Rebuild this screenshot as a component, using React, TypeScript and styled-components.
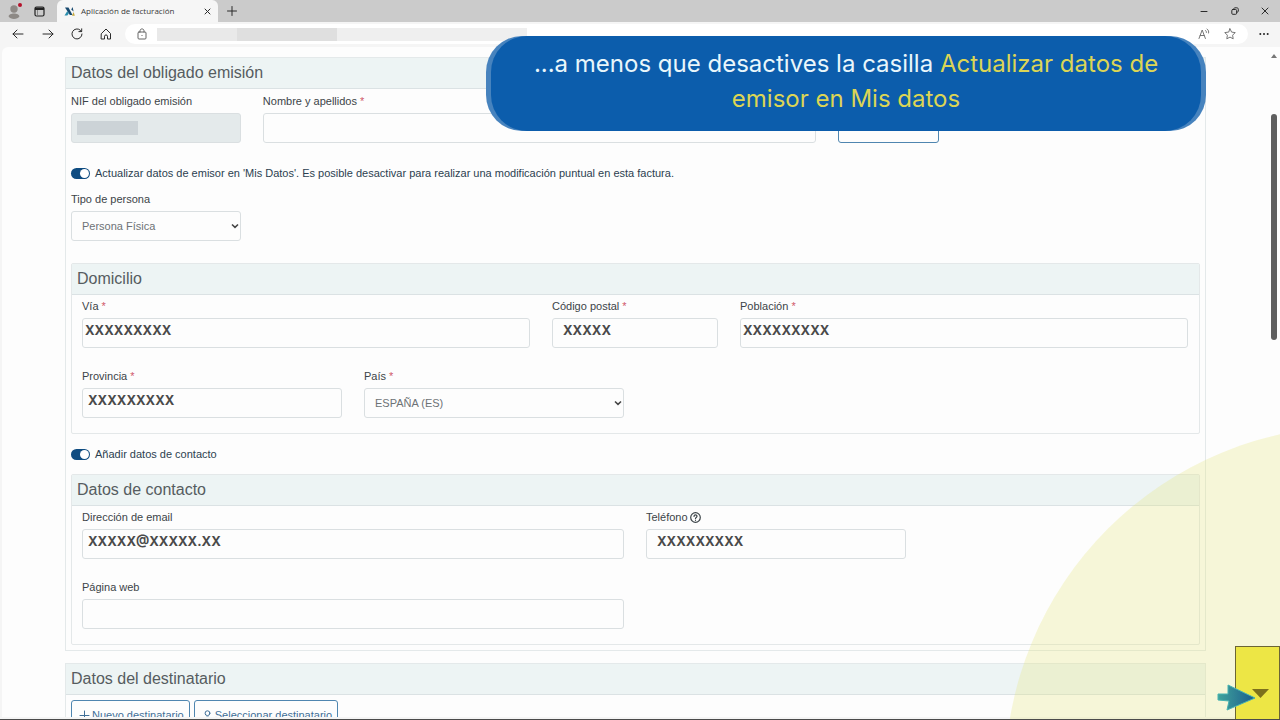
import React, { useState } from "react";
import styled, { createGlobalStyle, css } from "styled-components";

const GlobalStyle = createGlobalStyle`
  *, *::before, *::after { box-sizing: border-box; }
  body {
    margin: 0;
    background: #fdfdfd;
    color: #3c4448;
    font: 11px/16px "Liberation Sans", Arial, sans-serif;
  }
  button, input, select { font: inherit; color: inherit; }
`;

const Shell = styled.div`
  position: relative;
  display: flex;
  flex-direction: column;
  height: 100vh;
  overflow: hidden;
  background: #f5f5f5;
  border-bottom: 1px solid #4b4b4b;
`;

/* Browser chrome */
const TabStrip = styled.header`
  display: flex;
  align-items: stretch;
  flex: none;
  height: 22px;
  background: #cbcbcb;
`;

const IconButton = styled.button<{ $width?: number }>`
  display: flex;
  align-items: center;
  justify-content: center;
  flex: none;
  width: ${(p) => p.$width ?? 30}px;
  padding: 0;
  border: 0;
  background: none;
  color: #2b2b2b;
`;

const ProfileArea = styled.div`
  display: flex;
  width: 57px;
  padding-left: 2px;
`;

const Tab = styled.div`
  display: flex;
  align-items: center;
  gap: 6px;
  width: 161px;
  padding: 0 2px 0 7px;
  background: #f6f6f6;
  border-radius: 6px 6px 0 0;
  color: #3a3a3a;
  font: 8px/12px "Open Sans", "Noto Sans", sans-serif;
`;

const TabTitle = styled.span`
  flex: 1;
  white-space: nowrap;
`;

const WindowButtons = styled.div`
  display: flex;
  margin-left: auto;
`;

const Toolbar = styled.nav`
  display: flex;
  flex: none;
  height: 25px;
  padding: 2px 0 3px 3px;
`;

const AddressBar = styled.div`
  display: flex;
  flex: 1;
  align-items: center;
  margin-left: 4px;
  padding: 0 5px 0 2px;
  border-radius: 10px;
  background: #fff;
`;

const HiddenAddress = styled.div`
  display: flex;
  width: 370px;
  height: 13px;
  margin-right: auto;
  background: linear-gradient(90deg, #e9e9e9 0 80px, #dfdfdf 80px 180px, #efefef 180px);
`;

/* Page */
const Page = styled.main`
  position: relative;
  flex: 1;
  min-height: 0;
  margin: 0 0 2px 2px;
  padding: 10px 74px 0 63px;
  overflow: hidden;
  border-radius: 6px 0 0 0;
  background: #fdfdfd;
`;

const Section = styled.section`
  margin-bottom: 12px;
  border: 1px solid #e4e9ea;
`;

const SectionTitle = styled.h2`
  margin: 0;
  padding: 5px;
  border-bottom: 1px solid #dbe2e4;
  background: #edf4f4;
  color: #565c60;
  font-size: 16px;
  font-weight: 400;
  line-height: 20px;
`;

const SectionBody = styled.div`
  padding: 4px 5px 5px;
`;

const Group = styled.section`
  border: 1px solid #e4e8e9;
  border-radius: 2px;
`;

const GroupBody = styled.div`
  display: grid;
  gap: 20px;
  padding: 3px 11px 15px 10px;
`;

const Grid = styled.div`
  display: grid;
  grid-template-columns: repeat(12, 1fr);
  column-gap: 22px;
`;

const Field = styled.div<{ $span: number }>`
  grid-column: span ${(p) => p.$span};
  display: flex;
  flex-direction: column;
  gap: 4px;
  min-width: 0;
`;

const LabelRow = styled.div`
  display: flex;
  align-items: center;
  gap: 2px;
  height: 16px;
`;

const Required = styled.span`
  color: #d0596a;
`;

const control = css`
  width: 100%;
  height: 30px;
  border: 1px solid #dadfe1;
  border-radius: 3px;
  background: #fdfdfd;
`;

const TextInput = styled.input<{ $indent: number }>`
  ${control}
  padding: 0 8px 7px ${(p) => p.$indent}px;
  color: #4a4a4a;
  font-family: Inter, "Noto Sans", sans-serif;
  font-size: 13px;
  font-weight: 700;
`;

const Select = styled.select`
  ${control}
  appearance: none;
  padding: 0 14px 0 10px;
  background: #fdfdfd
    url("data:image/svg+xml,%3Csvg xmlns='http://www.w3.org/2000/svg' width='8' height='6'%3E%3Cpath d='M1 1.500l3 2.800 3-2.800' fill='none' stroke='%23454545' stroke-width='1.600'/%3E%3C/svg%3E")
    no-repeat right 1px center;
  color: #6d7276;
`;

const Masked = styled.div`
  ${control}
  display: flex;
  align-items: center;
  padding-left: 5px;
  background: #e4eaeb;

  &::before {
    content: "";
    width: 61px;
    height: 14px;
    background: #ccd3d7;
  }
`;

const SwitchLabel = styled.label<{ $top: number; $bottom: number }>`
  display: flex;
  align-items: center;
  gap: 5px;
  height: 16px;
  margin: ${(p) => p.$top}px 0 ${(p) => p.$bottom}px;
  color: #2c3f50;
`;

const SwitchInput = styled.input`
  appearance: none;
  display: flex;
  justify-content: flex-end;
  width: 19px;
  height: 11px;
  margin: 0;
  padding: 1px;
  border-radius: 6px;
  background: #0f4c81;

  &::before {
    content: "";
    width: 9px;
    height: 9px;
    border-radius: 50%;
    background: #fff;
  }
  &:not(:checked) {
    justify-content: flex-start;
    background: #9aa5ad;
  }
`;

const SelectBlock = styled.div`
  margin-bottom: 22px;
`;

const OutlineButton = styled.button`
  display: flex;
  align-items: center;
  justify-content: center;
  gap: 2px;
  height: 30px;
  padding: 0 5px 0 7px;
  border: 1px solid #4f86b0;
  border-radius: 3px;
  background: #fdfdfd;
  color: #3f6f98;
  white-space: nowrap;
`;

const Actions = styled.div`
  display: flex;
  gap: 4px;
  padding-top: 1px;
`;

const NameAction = styled.div`
  grid-column: span 2;
  display: flex;
  align-items: flex-end;

  & > button { width: 101px; }
`;

/* Overlays */
const ScrollRail = styled.div`
  position: absolute;
  top: 6px;
  right: 0;
  bottom: 0;
  display: flex;
  flex-direction: column;
  align-items: center;
  gap: 56px;
  width: 13px;
  padding-top: 1px;
`;

const ScrollThumb = styled.div`
  width: 6px;
  height: 226px;
  border-radius: 3px;
  background: #5f5f5f;
`;

const Glow = styled.div`
  position: absolute;
  right: -427px;
  bottom: -409px;
  width: 702px;
  height: 702px;
  border-radius: 50%;
  background: rgba(228, 230, 120, 0.27);
  pointer-events: none;
`;

const Caption = styled.aside`
  position: absolute;
  top: 36px;
  right: 74px;
  width: 720px;
  padding: 0 5px;
  border-radius: 36px;
  background: #4783be;
`;

const CaptionText = styled.p`
  margin: 0;
  padding: 10px 30px 15px;
  border-radius: 36px;
  background: #0c5dac;
  color: #e9f6fb;
  font: 24px/35px Inter, "Open Sans", sans-serif;
  text-align: center;
`;

const Highlight = styled.span`
  color: #dcd555;
`;

const ScrollHint = styled.div`
  position: absolute;
  right: 0;
  bottom: 0;
  display: flex;
  width: 45px;
  height: 73px;
  border: 1px solid #6b6534;
  border-bottom: 0;
  background: #ede645;
`;

const Pointer = styled.svg`
  position: absolute;
  left: -20px;
  top: 36px;
  overflow: visible;
`;

const line = { fill: "none", stroke: "currentColor", strokeLinecap: "round", strokeLinejoin: "round" } as const;

function TextField(props: { id: string; label: string; span: number; value?: string; indent?: number; required?: boolean; help?: boolean }) {
  return (
    <Field $span={props.span}>
      <LabelRow>
        <label htmlFor={props.id}>
          {props.label}
          {props.required && <Required> *</Required>}
        </label>
        {props.help && (
          <svg width="11" height="11" viewBox="0 0 11 11" {...line} strokeWidth="1.2">
            <circle cx="5.5" cy="5.5" r="4.8" />
            <path d="M4 4.4c.1-2 3-1.9 3-.1 0 1.1-1.5 1.1-1.5 2.200M5.500 8.200v.1" />
          </svg>
        )}
      </LabelRow>
      <TextInput id={props.id} type="text" defaultValue={props.value} $indent={props.indent ?? 10} />
    </Field>
  );
}

function SelectField(props: { id: string; label: string; span: number; option: string; required?: boolean }) {
  return (
    <Field $span={props.span}>
      <LabelRow>
        <label htmlFor={props.id}>
          {props.label}
          {props.required && <Required> *</Required>}
        </label>
      </LabelRow>
      <Select id={props.id}>
        <option>{props.option}</option>
      </Select>
    </Field>
  );
}

function Switch(props: { text: string; top: number; bottom: number }) {
  const [on, setOn] = useState(true);
  return (
    <SwitchLabel $top={props.top} $bottom={props.bottom}>
      <SwitchInput type="checkbox" role="switch" checked={on} onChange={() => setOn(!on)} />
      {props.text}
    </SwitchLabel>
  );
}

function BrowserChrome() {
  return (
    <>
      <TabStrip>
        <ProfileArea>
          <IconButton $width={24} aria-label="Perfil">
            <svg width="16" height="18" viewBox="0 0 16 18">
              <circle cx="8" cy="7" r="3.7" fill="#8d8985" />
              <path d="M2.600 14.500c0-4 10.800-4 10.800 0-1.600 3.300-9.200 3.300-10.800 0z" fill="#8d8985" />
              <circle cx="14" cy="3" r="2" fill="#b5122b" />
            </svg>
          </IconButton>
          <IconButton $width={27} aria-label="Pestañas">
            <svg width="11" height="11" viewBox="0 0 11 11">
              <rect x="1" y="1" width="9" height="9" rx="1.500" fill="none" stroke="#222" strokeWidth="1.200" />
              <path d="M1 1.500h9v2.500H1z" fill="#222" />
              <path d="M3.500 4v6" stroke="#777" strokeWidth=".8" />
            </svg>
          </IconButton>
        </ProfileArea>
        <Tab>
          <svg width="11" height="11" viewBox="0 0 11 11">
            <path d="M1 1.500h3.500L8.500 9H5.800z" fill="#17496f" />
            <path d="M.5 9.500 3.300 5l1.500 2.600-1.500 1.900z" fill="#2c8fae" />
            <path d="M7.200 3.500 8.600 1l1 4.500z" fill="#17496f" />
            <path d="M8 9.800h2.800L9.600 6z" fill="#c6a83c" />
          </svg>
          <TabTitle>Aplicación de facturación</TabTitle>
          <IconButton $width={18} aria-label="Cerrar pestaña">
            <svg width="7" height="7" viewBox="0 0 7 7" {...line}><path d="M1 1l5 5M6 1 1 6" /></svg>
          </IconButton>
        </Tab>
        <IconButton $width={28} aria-label="Nueva pestaña">
          <svg width="10" height="10" viewBox="0 0 10 10" {...line}><path d="M5 .5v9M.5 5h9" /></svg>
        </IconButton>
        <WindowButtons>
          <IconButton aria-label="Minimizar">
            <svg width="8" height="8" viewBox="0 0 8 8" {...line}><path d="M1 4.500h6" /></svg>
          </IconButton>
          <IconButton $width={31} aria-label="Restaurar">
            <svg width="8" height="8" viewBox="0 0 8 8" {...line}>
              <rect x=".8" y="2.500" width="4.800" height="4.800" rx="1" />
              <path d="M2.800 1.600C3 1 3.400.8 4 .8h1.800c.9 0 1.500.6 1.500 1.500V4c0 .6-.3 1-.8 1.200" />
            </svg>
          </IconButton>
          <IconButton aria-label="Cerrar">
            <svg width="8" height="8" viewBox="0 0 8 8" {...line}><path d="M1 1l6 6M7 1 1 7" /></svg>
          </IconButton>
        </WindowButtons>
      </TabStrip>
      <Toolbar>
        <IconButton aria-label="Atrás">
          <svg width="12" height="10" viewBox="0 0 12 10" {...line}><path d="M11 5H1M5 1 1 5l4 4" /></svg>
        </IconButton>
        <IconButton aria-label="Adelante">
          <svg width="12" height="10" viewBox="0 0 12 10" {...line}><path d="M1 5h10M7 1l4 4-4 4" /></svg>
        </IconButton>
        <IconButton $width={28} aria-label="Actualizar">
          <svg width="12" height="12" viewBox="0 0 12 12" {...line}><path d="M11 6A5 5 0 1 1 9.300 2.200L10.500 3.500M10.700.8v2.800H7.900" /></svg>
        </IconButton>
        <IconButton aria-label="Inicio">
          <svg width="12" height="12" viewBox="0 0 12 12" {...line}><path d="M1.500 5.500 6 1l4.500 4.500V11H7.500V8.200C7.500 6.500 4.500 6.500 4.500 8.200V11h-3z" /></svg>
        </IconButton>
        <AddressBar>
          <IconButton aria-label="Información del sitio">
            <svg width="10" height="12" viewBox="0 0 10 12" {...line} stroke="#666">
              <rect x="1" y="4" width="8" height="7" rx="1" />
              <path d="M3 4V2.800C3 .3 7 .3 7 2.800V4M5 7.400v.2" />
            </svg>
          </IconButton>
          <HiddenAddress />
          <IconButton $width={26} aria-label="Leer en voz alta">
            <svg width="12" height="12" viewBox="0 0 12 12" {...line} stroke="#666" strokeWidth=".9">
              <path d="M1 10.500 4.200 2l3.200 8.500M2.200 7.500h4M7.500 2.500c.8.500 1 1.200.9 2M9 1c1.500 1 2 2.500 1.600 4" />
            </svg>
          </IconButton>
          <IconButton $width={26} aria-label="Favoritos">
            <svg width="12" height="12" viewBox="0 0 12 12" {...line} stroke="#666" strokeWidth=".9">
              <path d="m6 .8 1.600 3.300 3.600.5-2.600 2.600.6 3.600L6 9.100l-3.200 1.700.6-3.600L.8 4.600l3.600-.5z" />
            </svg>
          </IconButton>
        </AddressBar>
        <IconButton $width={32} aria-label="Más">
          <svg width="10" height="4" viewBox="0 0 10 4" fill="#222">
            <circle cx="1.300" cy="2" r="1" /><circle cx="5" cy="2" r="1" /><circle cx="8.700" cy="2" r="1" />
          </svg>
        </IconButton>
      </Toolbar>
    </>
  );
}

export default function App() {
  return (
    <Shell>
      <GlobalStyle />
      <BrowserChrome />
      <Page>
        <Section>
          <SectionTitle>Datos del obligado emisión</SectionTitle>
          <SectionBody>
            <Grid>
              <Field $span={2}>
                <LabelRow>NIF del obligado emisión</LabelRow>
                <Masked />
              </Field>
              <TextField id="nombre" label="Nombre y apellidos" span={6} required />
              <NameAction>
                <OutlineButton aria-label="Seleccionar obligado" />
              </NameAction>
            </Grid>
            <Switch
              text="Actualizar datos de emisor en 'Mis Datos'. Es posible desactivar para realizar una modificación puntual en esta factura."
              top={22}
              bottom={10}
            />
            <SelectBlock>
              <Grid>
                <SelectField id="tipo" label="Tipo de persona" span={2} option="Persona Física" />
              </Grid>
            </SelectBlock>
            <Group>
              <SectionTitle as="h3">Domicilio</SectionTitle>
              <GroupBody>
                <Grid>
                  <TextField id="via" label="Vía" span={5} value="XXXXXXXXX" indent={2} required />
                  <TextField id="cp" label="Código postal" span={2} value="XXXXX" required />
                  <TextField id="poblacion" label="Población" span={5} value="XXXXXXXXX" indent={2} required />
                </Grid>
                <Grid>
                  <TextField id="provincia" label="Provincia" span={3} value="XXXXXXXXX" indent={5} required />
                  <SelectField id="pais" label="País" span={3} option="ESPAÑA (ES)" required />
                </Grid>
              </GroupBody>
            </Group>
            <Switch text="Añadir datos de contacto" top={12} bottom={12} />
            <Group>
              <SectionTitle as="h3">Datos de contacto</SectionTitle>
              <GroupBody>
                <Grid>
                  <TextField id="email" label="Dirección de email" span={6} value="XXXXX@XXXXX.XX" indent={5} />
                  <TextField id="telefono" label="Teléfono" span={3} value="XXXXXXXXX" help />
                </Grid>
                <Grid>
                  <TextField id="web" label="Página web" span={6} />
                </Grid>
              </GroupBody>
            </Group>
          </SectionBody>
        </Section>
        <Section>
          <SectionTitle>Datos del destinatario</SectionTitle>
          <SectionBody>
            <Actions>
              <OutlineButton>
                <svg width="11" height="11" viewBox="0 0 11 11" {...line}><path d="M5.500 1v9M1 5.500h9" /></svg>
                Nuevo destinatario
              </OutlineButton>
              <OutlineButton>
                <svg width="11" height="11" viewBox="0 0 11 11" {...line}>
                  <circle cx="5.500" cy="3.200" r="2.400" />
                  <path d="M2 10c0-4 7-4 7 0z" />
                </svg>
                Seleccionar destinatario
              </OutlineButton>
            </Actions>
          </SectionBody>
        </Section>
        <ScrollRail>
          <svg width="6" height="4" viewBox="0 0 6 4"><path d="M0 4 3 0l3 4z" fill="#777" /></svg>
          <ScrollThumb />
        </ScrollRail>
      </Page>
      <Glow />
      <Caption>
        <CaptionText>
          ...a menos que desactives la casilla <Highlight>Actualizar datos de emisor en Mis datos</Highlight>
        </CaptionText>
      </Caption>
      <ScrollHint>
        <svg width="43" height="73" viewBox="0 0 43 73"><path d="M16 42h17l-8.500 9z" fill="#7c701c" /></svg>
        <Pointer width="42" height="28" viewBox="0 0 42 28">
          <defs>
            <linearGradient id="pointerFill">
              <stop offset="0" stopColor="#3fa39c" />
              <stop offset="1" stopColor="#1c5c8c" />
            </linearGradient>
          </defs>
          <path d="M2 11h10V2l27 13-28 12 2-9-11-1z" fill="url(#pointerFill)" stroke="#47b3b0" />
        </Pointer>
      </ScrollHint>
    </Shell>
  );
}
